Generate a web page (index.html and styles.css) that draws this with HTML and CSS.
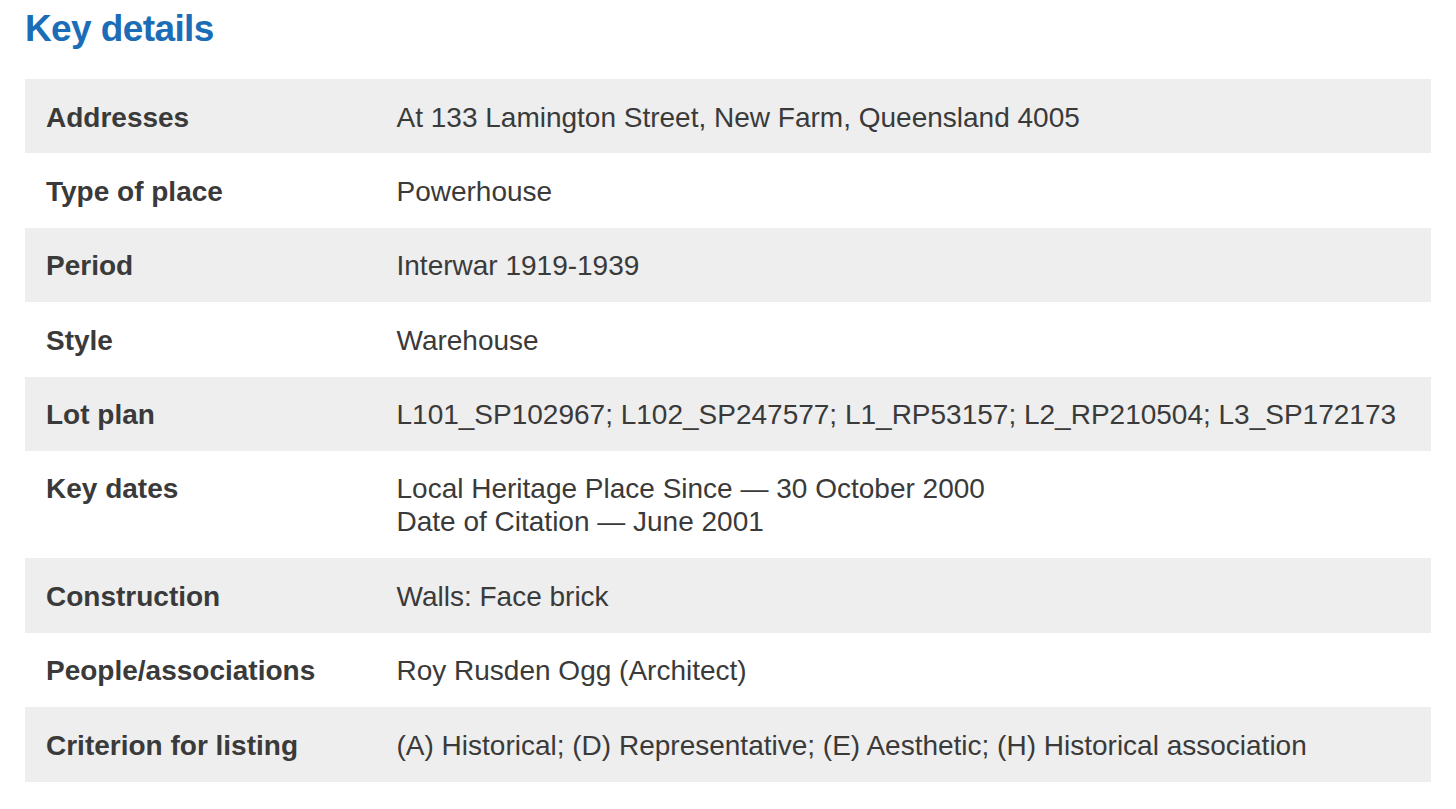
FILE: index.html
```html
<!DOCTYPE html>
<html lang="en">
<head>
<meta charset="utf-8">
<title>Key details</title>
<link rel="stylesheet" href="styles.css">
</head>
<body>
<main class="page">
  <h2 class="title">Key details</h2>
  <table class="details">
    <tbody>
      <tr><th>Addresses</th><td>At 133 Lamington Street, New Farm, Queensland 4005</td></tr>
      <tr><th>Type of place</th><td>Powerhouse</td></tr>
      <tr><th>Period</th><td>Interwar 1919-1939</td></tr>
      <tr><th>Style</th><td>Warehouse</td></tr>
      <tr><th>Lot plan</th><td>L101_SP102967; L102_SP247577; L1_RP53157; L2_RP210504; L3_SP172173</td></tr>
      <tr><th>Key dates</th><td>Local Heritage Place Since — 30 October 2000<br>Date of Citation — June 2001</td></tr>
      <tr><th>Construction</th><td>Walls: Face brick</td></tr>
      <tr><th>People/associations</th><td>Roy Rusden Ogg (Architect)</td></tr>
      <tr><th>Criterion for listing</th><td>(A) Historical; (D) Representative; (E) Aesthetic; (H) Historical association</td></tr>
    </tbody>
  </table>
</main>
</body>
</html>
```
FILE: styles.css
```css
html, body {
  margin: 0;
  padding: 0;
  background: #ffffff;
}
body {
  font-family: "Liberation Sans", Arial, Helvetica, sans-serif;
  color: #3a3a3a;
}
.page {
  padding: 7px 25px 0 25px;
}
.title {
  margin: 0 0 28px 0;
  font-size: 37px;
  line-height: 44px;
  font-weight: 700;
  letter-spacing: -0.6px;
  color: #1a6db6;
}
.details {
  width: 100%;
  border-collapse: collapse;
  border-spacing: 0;
  font-size: 28px;
  line-height: 33px;
}
.details tr:nth-child(odd) {
  background: #eeeeee;
}
.details th,
.details td {
  padding: 21.5px 21px 19.9px 21px;
  text-align: left;
  vertical-align: top;
}
.details th {
  width: 25%;
  box-sizing: border-box;
  font-weight: 700;
  color: #3a3a3a;
}
.details td {
  font-weight: 400;
  padding-left: 20px;
}
```
